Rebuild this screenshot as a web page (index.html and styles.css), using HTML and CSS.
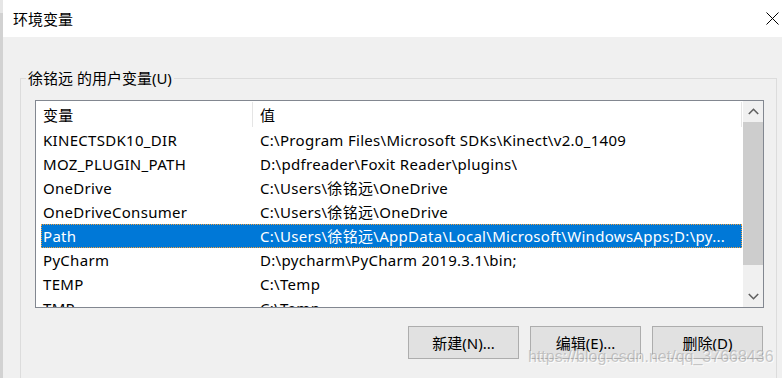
FILE: index.html
```html
<!DOCTYPE html>
<html lang="zh-CN">
<head>
<meta charset="utf-8">
<title>环境变量</title>
<link rel="stylesheet" href="styles.css">
</head>
<body>
<div class="desk">
  <div class="edge"></div>
  <div class="win">
    <div class="titlebar">
      <span class="title">环境变量</span>
      <svg class="close" width="13" height="13" viewBox="0 0 13 13"><path d="M0.5 0.5 L12.5 12.5 M12.5 0.5 L0.5 12.5" stroke="#000" stroke-width="1" fill="none"/></svg>
    </div>
    <div class="body">
      <fieldset class="group">
        <legend>徐铭远 的用户变量(U)</legend>
        <div class="list">
          <div class="table">
            <div class="head">
              <div class="hcell name">变量</div>
              <div class="hcell val">值</div>
            </div>
            <div class="row"><span class="name">KINECTSDK10_DIR</span><span class="val">C:\Program Files\Microsoft SDKs\Kinect\v2.0_1409</span></div>
            <div class="row"><span class="name">MOZ_PLUGIN_PATH</span><span class="val">D:\pdfreader\Foxit Reader\plugins\</span></div>
            <div class="row"><span class="name">OneDrive</span><span class="val">C:\Users\徐铭远\OneDrive</span></div>
            <div class="row"><span class="name">OneDriveConsumer</span><span class="val">C:\Users\徐铭远\OneDrive</span></div>
            <div class="row sel"><span class="name">Path</span><span class="val">C:\Users\徐铭远\AppData\Local\Microsoft\WindowsApps;D:\py...</span></div>
            <div class="row"><span class="name">PyCharm</span><span class="val">D:\pycharm\PyCharm 2019.3.1\bin;</span></div>
            <div class="row"><span class="name">TEMP</span><span class="val">C:\Temp</span></div>
            <div class="row"><span class="name">TMP</span><span class="val">C:\Temp</span></div>
          </div>
          <div class="scroll">
            <div class="arrow">
              <svg width="11" height="7" viewBox="0 0 11 7"><path d="M0.8 6 L5.5 1.3 L10.2 6" stroke="#606060" stroke-width="1.6" fill="none"/></svg>
            </div>
            <div class="track"><div class="thumb"></div></div>
            <div class="arrow">
              <svg width="11" height="7" viewBox="0 0 11 7"><path d="M0.8 1 L5.5 5.7 L10.2 1" stroke="#606060" stroke-width="1.6" fill="none"/></svg>
            </div>
          </div>
        </div>
        <div class="buttons">
          <button class="btn">新建(N)...</button>
          <button class="btn">编辑(E)...</button>
          <button class="btn">删除(D)</button>
        </div>
      </fieldset>
      <div class="watermark">https://blog.csdn.net/qq_37668436</div>
    </div>
  </div>
</div>
</body>
</html>
```

FILE: styles.css
```css
html, body {
  margin: 0;
  padding: 0;
  width: 782px;
  height: 378px;
  overflow: hidden;
  font-family: "Noto Sans", "Noto Sans CJK SC", sans-serif;
  font-size: 15px;
  color: #000;
}

.desk {
  display: flex;
  height: 378px;
  overflow: hidden;
}

.edge {
  width: 3px;
  flex: none;
  background: #d2d2d2;
  border-top: 13px solid #e6e6e6;
  box-sizing: border-box;
}

.win {
  flex: 1;
  display: flex;
  flex-direction: column;
  min-height: 0;
}

.titlebar {
  flex: none;
  height: 37px;
  background: #fff;
  display: flex;
  align-items: center;
  justify-content: space-between;
  padding: 0 3px 0 10px;
}

.title {
  font-family: "Noto Sans CJK SC", sans-serif;
  font-size: 15px;
  line-height: 20px;
}

.close {
  display: block;
}

.body {
  flex: 1;
  min-height: 0;
  overflow: hidden;
  background: #f0f0f0;
  padding: 31px 0 0 17px;
  position: relative;
}

.group {
  margin: 0;
  width: 756px;
  box-sizing: border-box;
  border: 1px solid #dcdcdc;
  border-bottom: none;
  padding: 12px 12px 0 14px;
  height: 320px;
}

.group legend {
  font-size: 15px;
  line-height: 20px;
  padding: 0 2px;
  margin-left: -9px;
}

.list {
  width: 729px;
  height: 208px;
  box-sizing: border-box;
  border: 1px solid #828790;
  background: #fff;
  display: flex;
  overflow: hidden;
}

.table {
  flex: 1;
  overflow: hidden;
  letter-spacing: 0.3px;
}

.head {
  display: flex;
  height: 27px;
}

.hcell {
  line-height: 26px;
  height: 25px;
  padding-left: 7px;
  box-sizing: border-box;
  margin-top: 1px;
}

.hcell.name {
  width: 217px;
  border-right: 1px solid #e5e5e5;
}

.hcell.val {
  flex: 1;
  border-right: 1px solid #e5e5e5;
}

.row {
  display: flex;
  height: 24px;
  line-height: 24px;
  margin-left: 5px;
  white-space: nowrap;
}

.row .name {
  width: 212px;
  padding-left: 2px;
  box-sizing: border-box;
  flex: none;
}

.row .val {
  padding-left: 7px;
  overflow: hidden;
}

.row.sel {
  background: #0078d7;
  color: #fff;
  outline: 1px dotted #f0a040;
  outline-offset: -1px;
}

.scroll {
  width: 20px;
  background: #f0f0f0;
  display: flex;
  flex-direction: column;
  margin-left: 1px;
}

.arrow {
  height: 21px;
  flex: none;
  display: flex;
  align-items: center;
  justify-content: center;
}

.track {
  flex: 1;
  padding-bottom: 20px;
}

.thumb {
  height: 143px;
  background: #cdcdcd;
}

.buttons {
  display: flex;
  justify-content: flex-end;
  gap: 11px;
  margin-top: 18px;
  margin-right: 1px;
}

.btn {
  width: 111px;
  height: 33px;
  box-sizing: border-box;
  border: 1px solid #adadad;
  background: #e1e1e1;
  font-family: "Noto Sans", "Noto Sans CJK SC", sans-serif;
  font-size: 15px;
  color: #000;
  padding: 0;
  margin: 0;
}

.watermark {
  position: absolute;
  left: 525px;
  top: 311px;
  font-family: "Liberation Sans", Arial, sans-serif;
  font-size: 16px;
  color: rgba(160, 160, 160, 0.55);
  text-shadow: 1px 1px 0 rgba(255, 255, 255, 0.8);
  white-space: nowrap;
}
```
